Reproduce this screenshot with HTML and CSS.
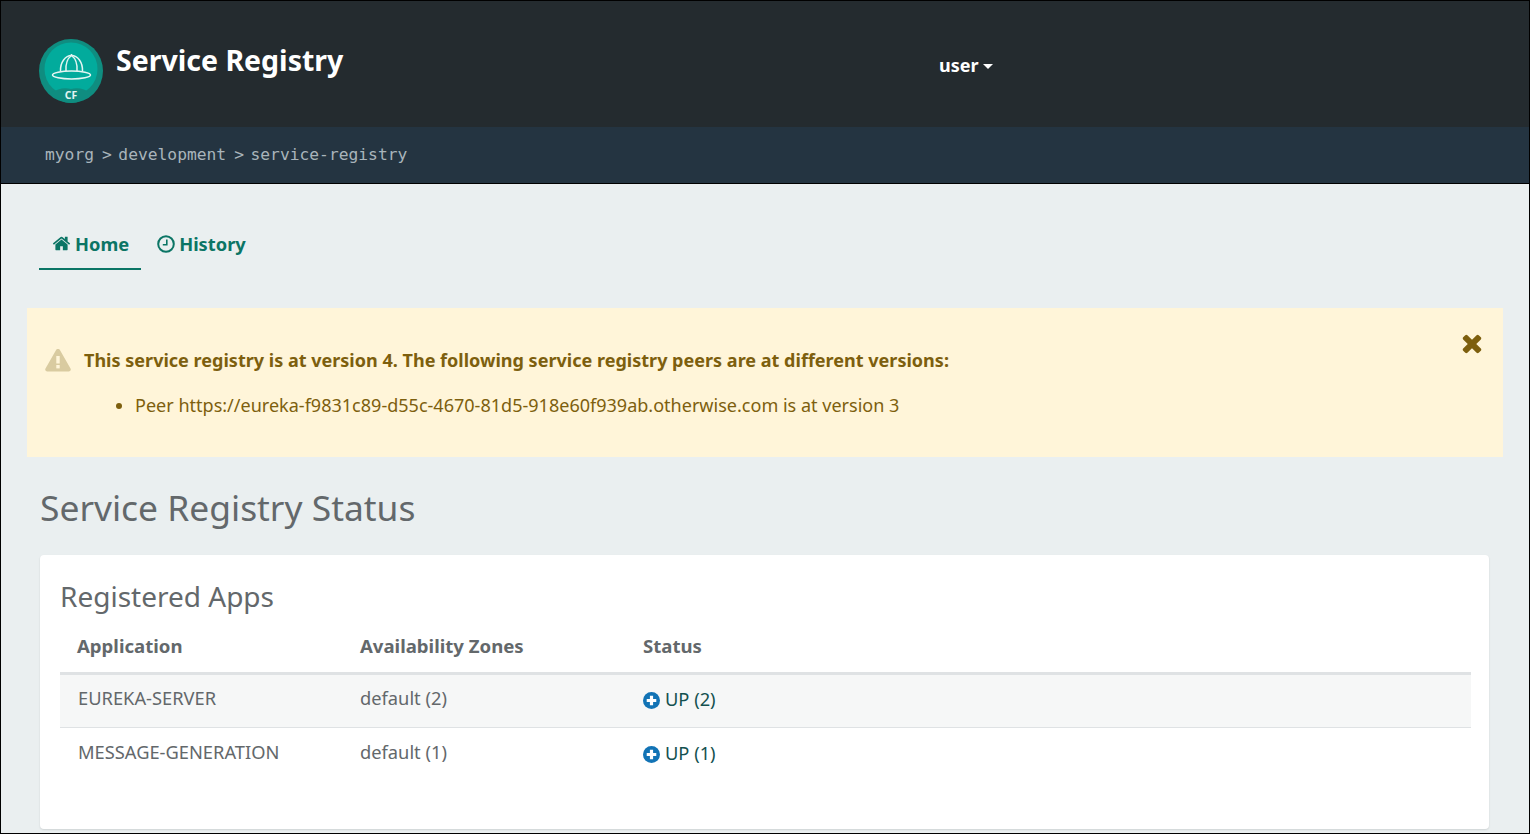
FILE: index.html
```html
<!DOCTYPE html>
<html lang="en">
<head>
    <meta charset="UTF-8">
    <title>Service Registry</title>
    <link rel="stylesheet" href="styles.css">
</head>
<body>
    <div class="window">
        <header class="top-bar">
            <div class="brand">
                <svg class="logo" viewBox="0 0 64 64" width="64" height="64">
                    <circle cx="32" cy="32" r="32" fill="#0f8d80"/>
                    <circle cx="32" cy="30" r="26.500" fill="#02ab9c"/>
                    <path d="M12 54 Q22 47.500 32 50 Q42 47.500 52 54 Q42 64 32 64 Q22 64 12 54z" fill="#0f8d80"/>
                    <g fill="none" stroke="#e4f5f2" stroke-width="1.500">
                        <ellipse cx="32.500" cy="36" rx="19" ry="4"/>
                        <path d="M21.500 32.500 C21 23 26.500 16.500 32.500 16.500 C38.500 16.500 44 23 43.500 32.500"/>
                        <path d="M27 32 C26.500 25 29 19 32.500 16.500 C36 19 38.500 25 38 32"/>
                        <path d="M32.500 16.500v-1.500"/>
                    </g>
                    <text x="32" y="60" class="logo-text">CF</text>
                </svg>
                <span class="brand-name">Service Registry</span>
            </div>
            <div class="user-menu">user<span class="caret"></span></div>
        </header>

        <div class="breadcrumb">
            <span>myorg</span><span class="sep">&gt;</span><span>development</span><span class="sep">&gt;</span><span>service-registry</span>
        </div>

        <main class="content">
            <nav class="tabs">
                <a class="tab active">
                    <svg class="tab-icon" viewBox="0 0 1792 1792" width="19" height="19"><path fill="currentColor" d="M1472 992v480q0 26-19 45t-45 19h-384v-384h-256v384h-384q-26 0-45-19t-19-45v-480q0-1 .5-3t.5-3l575-474 575 474q1 2 1 6zm223-69l-62 74q-8 9-21 11h-3q-13 0-21-7l-692-577-692 577q-12 8-24 7-13-2-21-11l-62-74q-8-10-7-23.500t11-21.500l719-599q32-26 76-26t76 26l244 204v-195q0-14 9-23t23-9h192q14 0 23 9t9 23v408l219 182q10 8 11 21.500t-7 23.500z"/></svg>
                    Home
                </a>
                <a class="tab">
                    <svg class="tab-icon" viewBox="0 0 18 18" width="18" height="18"><circle cx="9" cy="9" r="7.800" fill="none" stroke="currentColor" stroke-width="2"/><path d="M9.800 4.500v5.300H5.800" fill="none" stroke="currentColor" stroke-width="1.600"/></svg>
                    History
                </a>
            </nav>

            <div class="alert">
                <svg class="alert-close" viewBox="0 0 1792 1792" width="28" height="28"><path fill="currentColor" d="M1490 1322q0 40-28 68l-136 136q-28 28-68 28t-68-28l-294-294-294 294q-28 28-68 28t-68-28l-136-136q-28-28-28-68t28-68l294-294-294-294q-28-28-28-68t28-68l136-136q28-28 68-28t68 28l294 294 294-294q28-28 68-28t68 28l136 136q28 28 28 68t-28 68l-294 294 294 294q28 28 28 68z"/></svg>
                <div class="alert-title">
                    <svg class="alert-icon" viewBox="0 0 26 24" width="26" height="24">
                        <path d="M13 1 C14 1 14.700 1.500 15.200 2.400 L25.500 20.500 C26.300 22 25.400 23.500 23.700 23.500 H2.300 C.6 23.500 -.3 22 .5 20.500 L10.800 2.400 C11.300 1.500 12 1 13 1z" fill="#d9cba0"/>
                        <rect x="11.300" y="8" width="3.400" height="7.500" fill="#fff5d9"/>
                        <rect x="11.300" y="17" width="3.400" height="3.400" fill="#fff5d9"/>
                    </svg>
                    <strong>This service registry is at version 4. The following service registry peers are at different versions:</strong>
                </div>
                <ul class="alert-list">
                    <li>Peer https://eureka-f9831c89-d55c-4670-81d5-918e60f939ab.otherwise.com is at version 3</li>
                </ul>
            </div>

            <h1 class="page-title">Service Registry Status</h1>

            <section class="card">
                <h2 class="card-title">Registered Apps</h2>
                <table class="apps">
                    <thead>
                        <tr><th>Application</th><th>Availability Zones</th><th>Status</th></tr>
                    </thead>
                    <tbody>
                        <tr class="striped">
                            <td>EUREKA-SERVER</td>
                            <td>default (2)</td>
                            <td class="status"><svg class="status-icon" viewBox="0 0 16 16" width="17" height="17"><circle cx="8" cy="8" r="8" fill="#1273b5"/><path d="M8 3.500v9M3.500 8h9" stroke="#fff" stroke-width="3"/></svg>UP (2)</td>
                        </tr>
                        <tr>
                            <td>MESSAGE-GENERATION</td>
                            <td>default (1)</td>
                            <td class="status"><svg class="status-icon" viewBox="0 0 16 16" width="17" height="17"><circle cx="8" cy="8" r="8" fill="#1273b5"/><path d="M8 3.500v9M3.500 8h9" stroke="#fff" stroke-width="3"/></svg>UP (1)</td>
                        </tr>
                    </tbody>
                </table>
            </section>
        </main>
    </div>
</body>
</html>
```

FILE: styles.css
```css
* {
    margin: 0;
    padding: 0;
    box-sizing: border-box;
}

body {
    background-color: #eaeff0;
    font-family: 'Noto Sans', 'Lato', sans-serif;
    overflow: hidden;
}

.window {
    width: 1530px;
    height: 834px;
    border: 1px solid #000;
    display: flex;
    flex-direction: column;
    overflow: hidden;
}

.top-bar {
    height: 126px;
    background-color: #242b2f;
    display: flex;
    color: white;
    flex: none;
}

.brand {
    width: 938px;
    padding: 38px 0 0 38px;
    display: flex;
    align-items: flex-start;
}

.logo-text {
    fill: #e4f5f2;
    font-family: 'Noto Sans', sans-serif;
    font-size: 10.500px;
    font-weight: 700;
    text-anchor: middle;
}

.brand-name {
    margin: 1px 0 0 13px;
    font-size: 28.500px;
    line-height: 40px;
    font-weight: 700;
}

.user-menu {
    padding-top: 51px;
    font-size: 18px;
    line-height: 26px;
    font-weight: 700;
}

.caret {
    display: inline-block;
    margin: 0 0 3px 4px;
    border-top: 5px solid white;
    border-left: 5px solid transparent;
    border-right: 5px solid transparent;
}

.breadcrumb {
    height: 57px;
    flex: none;
    background-color: #243441;
    border-bottom: 1px solid #000;
    color: #a9b4bb;
    font-family: 'DejaVu Sans Mono', monospace;
    font-size: 16.300px;
    line-height: 56px;
    padding-left: 44px;
}

.sep {
    margin: 0 6.500px 0 8px;
}

.content {
    flex: 1;
    padding-top: 40px;
}

.tabs {
    display: flex;
    margin-left: 38px;
    height: 46px;
}

.tab {
    color: #0b7565;
    font-size: 18.300px;
    font-weight: 700;
    line-height: 40px;
    padding: 0 12px 0 13px;
    display: flex;
    align-items: center;
    gap: 4px;
    height: 46px;
    padding-bottom: 7px;
}

.tab.active {
    border-bottom: 2px solid #0b7565;
    padding-bottom: 5px;
}

.tab + .tab {
    margin-left: 3px;
}

.alert {
    position: relative;
    margin: 38px 26px 0 26px;
    height: 149px;
    background-color: #fff5d9;
    color: #7d5f0e;
    padding: 38px 18px 0 18px;
    font-size: 18.050px;
}

.alert-close {
    position: absolute;
    top: 21px;
    right: 17px;
}

.alert-title {
    display: flex;
    align-items: center;
    gap: 13px;
    height: 28px;
}

.alert-list {
    margin: 18px 0 0 90px;
    line-height: 26px;
}

.page-title {
    margin: 28px 0 0 39px;
    color: #63686b;
    font-size: 35.400px;
    font-weight: 400;
    line-height: 44px;
}

.card {
    margin: 26px 40px 0 39px;
    height: 274px;
    background-color: white;
    border-radius: 4px;
    box-shadow: 0 1px 2px rgba(0,0,0,0.12);
    padding: 21px 18px 0 20px;
}

.card-title {
    color: #63686b;
    font-size: 28px;
    font-weight: 400;
    line-height: 40px;
}

.apps {
    width: 100%;
    border-collapse: collapse;
    color: #63686b;
    font-size: 18.300px;
    table-layout: fixed;
}

.apps th {
    text-align: left;
    font-size: 18.600px;
    font-weight: 700;
    height: 57px;
    padding: 3px 0 0 17px;
    border-bottom: 3px solid #dfe2e4;
    width: 283px;
}

.apps th:last-child {
    width: auto;
}

.apps td {
    height: 54px;
    padding-left: 17px;
    padding-bottom: 6px;
}

.apps td:first-child {
    padding-left: 18px;
}

.striped td {
    background-color: #f6f7f7;
    border-bottom: 1px solid #dfe2e4;
}

.apps td.status {
    color: #14514f;
    padding-bottom: 4px;
}

.status-icon {
    vertical-align: -3px;
    margin-right: 5px;
}
```
